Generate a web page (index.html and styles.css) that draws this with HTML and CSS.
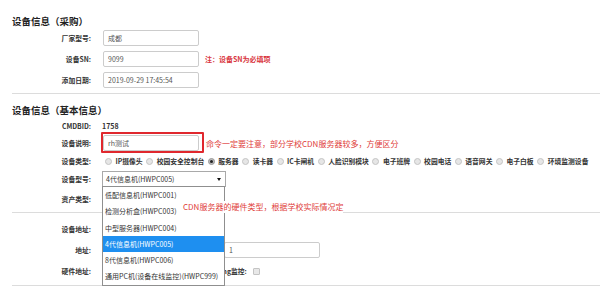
FILE: index.html
```html
<!DOCTYPE html>
<html lang="zh-CN">
<head>
<meta charset="utf-8">
<link rel="stylesheet" href="styles.css">
</head>
<body>
<div class="page">
  <h2 class="sec-title t1">设备信息（采购）</h2>
  <div class="row r-a"><span class="lbl">厂家型号:</span><span class="inp">成都</span></div>
  <div class="row r-a"><span class="lbl">设备SN:</span><span class="inp">9099</span><span class="note">注：设备SN为必填项</span></div>
  <div class="row r-a"><span class="lbl">添加日期:</span><span class="inp">2019-09-29 17:45:54</span></div>
  <hr class="sep s1">

  <h2 class="sec-title t2">设备信息（基本信息）</h2>
  <div class="row r-id"><span class="lbl">CMDBID:</span><span class="val">1758</span></div>
  <div class="row r-desc"><span class="lbl">设备说明:</span><span class="mark"><span class="inp">rh测试</span></span><span class="anno">命令一定要注意，部分学校CDN服务器较多，方便区分</span></div>
  <div class="row r-type"><span class="lbl">设备类型:</span>
    <div class="radios">
      <span class="opt"><i class="radio"></i>IP摄像头</span>
      <span class="opt"><i class="radio"></i>校园安全控制台</span>
      <span class="opt"><i class="radio on"></i>服务器</span>
      <span class="opt"><i class="radio"></i>读卡器</span>
      <span class="opt"><i class="radio"></i>IC卡闸机</span>
      <span class="opt"><i class="radio"></i>人脸识别模块</span>
      <span class="opt"><i class="radio"></i>电子班牌</span>
      <span class="opt"><i class="radio"></i>校园电话</span>
      <span class="opt"><i class="radio"></i>语音网关</span>
      <span class="opt"><i class="radio"></i>电子白板</span>
      <span class="opt"><i class="radio"></i>环境监测设备</span>
    </div>
  </div>
  <div class="row r-model"><span class="lbl">设备型号:</span>
    <div class="sel-wrap">
      <div class="sel"><span>4代信息机(HWPC005)</span><i class="caret"></i></div>
      <ul class="dd">
        <li>低配信息机(HWPC001)</li>
        <li>检测分析盒(HWPC003)</li>
        <li>中型服务器(HWPC004)</li>
        <li class="active">4代信息机(HWPC005)</li>
        <li>8代信息机(HWPC006)</li>
        <li>通用PC机(设备在线监控)(HWPC999)</li>
      </ul>
    </div>
  </div>
  <div class="row r-asset"><span class="lbl">资产类型:</span><span class="anno2">CDN服务器的硬件类型，根据学校实际情况定</span></div>
  <hr class="sep s2">

  <div class="row r-b r-first"><span class="lbl">设备地址:</span><span class="inp"></span></div>
  <div class="row r-b"><span class="lbl">地址:</span><span class="inp"></span><span class="inp addr">1</span></div>
  <div class="row r-b"><span class="lbl">硬件地址:</span><span class="inp"></span><span class="lbl2">Ping监控:</span><i class="chk"></i></div>
  <hr class="sep s3">
</div>
</body>
</html>
```

FILE: styles.css
```css
* { box-sizing: border-box; }
html, body { margin: 0; padding: 0; background: #fff; }
body {
  font-family: "Noto Sans CJK SC", "Microsoft YaHei", "Noto Sans", sans-serif;
  color: #333;
  width: 600px;
  overflow: hidden;
}
.page { padding-left: 12px; }

.sec-title {
  margin: 0;
  font-size: 9.5px;
  font-weight: bold;
  color: #222;
  line-height: 14px;
  height: 14px;
}
.t1 { margin-top: 14px; margin-bottom: 2px; }
.t2 { margin-top: 9px; }

.row {
  display: flex;
  align-items: center;
  position: relative;
}
.lbl {
  width: 79px;
  margin-right: 11px;
  text-align: right;
  font-size: 6.8px;
  font-weight: bold;
  line-height: 10px;
  color: #333;
  flex: none;
}
.inp {
  display: flex;
  align-items: center;
  width: 96px;
  height: 16px;
  margin-left: 1px;
  padding-left: 4px;
  border: 1px solid #ccc;
  border-radius: 2px;
  font-size: 7px;
  color: #555;
  background: #fff;
  flex: none;
}
.inp.addr { width: 96px; margin-left: 25px; padding-left: 4px; }

.r-a { height: 16px; }
.r-a + .r-a { margin-top: 5px; }

.note {
  margin-left: 6px;
  font-size: 7px;
  font-weight: bold;
  color: #d9363e;
}

.sep {
  border: 0;
  height: 1px;
  background: #dcdcdc;
  margin: 0;
}
.s1 { margin-top: 5px; }
.s2 { margin-top: 1px; }
.s3 { margin-top: 4px; }

.r-id { height: 18px; }
.val { font-size: 7px; font-weight: bold; color: #333; }

.r-desc { height: 16px; }
.mark { position: relative; display: flex; }
.mark::after {
  content: "";
  position: absolute;
  left: -1px;
  right: -5px;
  top: -3px;
  bottom: -2px;
  border: 2px solid #e0282e;
  border-radius: 1px;
}
.anno {
  margin-left: 7px;
  font-size: 8px;
  color: #e0403a;
  white-space: nowrap;
}

.r-type { height: 20px; }
.radios { display: flex; align-items: center; }
.opt {
  display: flex;
  align-items: center;
  font-size: 6.8px;
  font-weight: bold;
  color: #333;
  white-space: nowrap;
  margin-right: 0.5px;
}
.radio {
  display: inline-block;
  width: 7px;
  height: 7px;
  border-radius: 50%;
  border: 1px solid #c4c4c4;
  background: #e6e6e6;
  margin: 0 3.5px 0 3px;
  position: relative;
}
.radio.on { background: #bcbcbc; border-color: #999; }
.radio.on::after {
  content: "";
  position: absolute;
  left: 1px; top: 1px;
  width: 3px; height: 3px;
  border-radius: 50%;
  background: #222;
}

.r-model { height: 16px; }
.sel-wrap { position: relative; }
.sel {
  width: 124px;
  height: 16px;
  border: 1px solid #a9a9a9;
  display: flex;
  align-items: center;
  justify-content: space-between;
  padding: 0 4px 0 3px;
  font-size: 7px;
  color: #333;
  background: #fff;
}
.caret {
  width: 0; height: 0;
  border-left: 2.5px solid transparent;
  border-right: 2.5px solid transparent;
  border-top: 3.5px solid #111;
}
.dd {
  position: absolute;
  z-index: 5;
  left: 0;
  top: 15px;
  width: 123px;
  margin: 0;
  padding: 0;
  list-style: none;
  background: #fff;
  border: 1px solid #8f8f8f;
}
.dd li {
  height: 16.25px;
  line-height: 16.25px;
  padding-left: 2px;
  font-size: 7px;
  color: #333;
  white-space: nowrap;
}
.dd li.active { background: #1e8ff0; color: #fff; }

.r-asset { height: 24px; }
.anno2 {
  position: absolute;
  z-index: 6;
  left: 171px;
  top: 14px;
  line-height: 12px;
  font-size: 8px;
  color: #e0403a;
  background: #fff;
  white-space: nowrap;
}

.r-b { height: 20px; }
.r-b + .r-b { margin-top: 1px; }
.r-first { margin-top: 6px; }

.lbl2 {
  margin-left: 17px;
  font-size: 6.8px;
  font-weight: bold;
  color: #333;
}
.chk {
  display: inline-block;
  width: 7px;
  height: 7px;
  margin-left: 6px;
  border: 1px solid #c4c4c4;
  border-radius: 1px;
  background: #e8e8e8;
}
```
